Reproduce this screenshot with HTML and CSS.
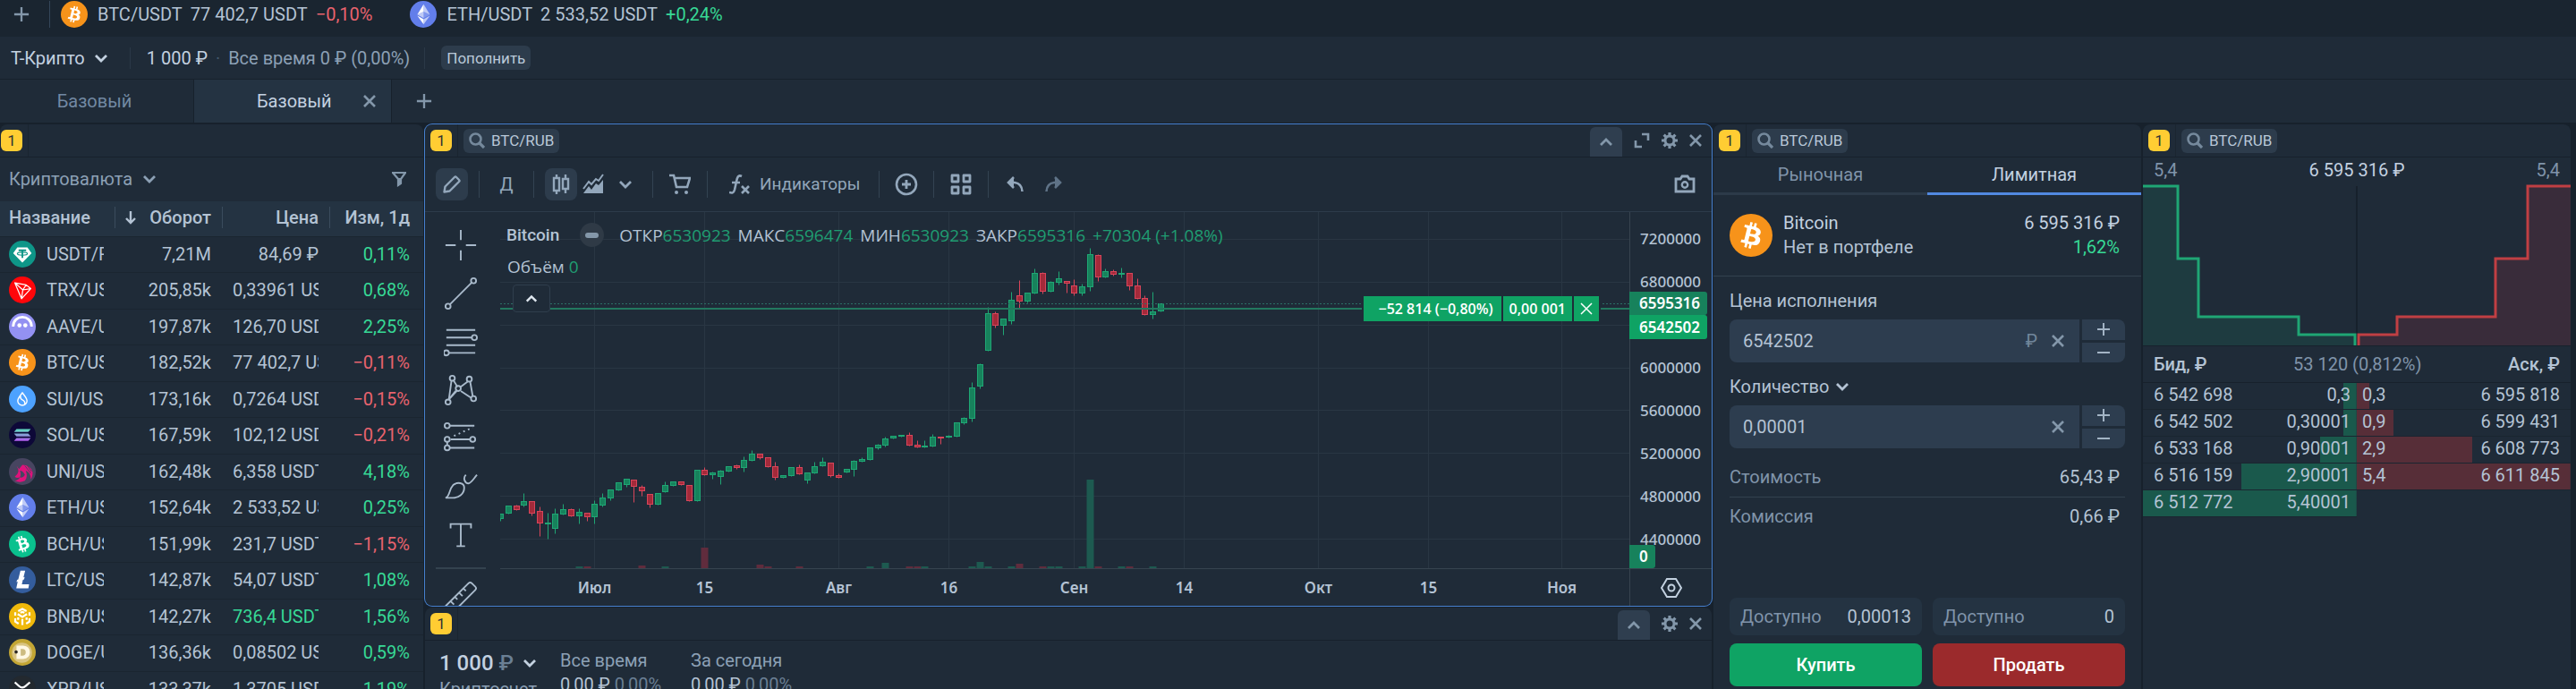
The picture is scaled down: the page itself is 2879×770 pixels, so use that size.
FILE: index.html
```
<!DOCTYPE html>
<html lang="ru">
<head>
  <meta charset="UTF-8" />
  <meta name="viewport" content="width=device-width, initial-scale=1.0"/>
  <title>BTC/RUB — Терминал</title>
  <link rel="stylesheet" href="styles.css">
</head>
<body>
  <!-- Icons -->
  <svg class="sprite" aria-hidden="true">
    <symbol id="i-plus" viewBox="0 0 20 20"><path d="M10 1v18M1 10h18" fill="none" stroke="currentColor" stroke-width="2.6"/></symbol>
    <symbol id="i-chevron" viewBox="0 0 16 16"><path d="M2 5l6 6 6-6" fill="none" stroke="currentColor" stroke-width="2.8"/></symbol>
    <symbol id="i-chevron-up" viewBox="0 0 16 16"><path d="M2 11l6-6 6 6" fill="none" stroke="currentColor" stroke-width="2.8"/></symbol>
    <symbol id="i-close" viewBox="0 0 14 14"><path d="M1 1l12 12M13 1L1 13" fill="none" stroke="currentColor" stroke-width="2.6"/></symbol>
    <symbol id="i-search" viewBox="0 0 18 18"><circle cx="7.5" cy="7.5" r="6" fill="none" stroke="currentColor" stroke-width="2.6"/><path d="M11.5 11.5l5.5 5.5" stroke="currentColor" stroke-width="3.2"/></symbol>
    <symbol id="i-filter" viewBox="0 0 18 18"><path d="M1 2h16M2 2l6 7v7l3-2V9l5-7" fill="none" stroke="currentColor" stroke-width="2.2"/><path d="M7 8h5v6l-4 3z" fill="currentColor"/></symbol>
    <symbol id="i-expand" viewBox="0 0 18 18"><path d="M9 2h7v7M2 9v7h7" fill="none" stroke="currentColor" stroke-width="2.6"/></symbol>
    <symbol id="i-gear" viewBox="0 0 18 18"><circle cx="9" cy="9" r="5" fill="none" stroke="currentColor" stroke-width="3"/><path d="M9 0v4M9 14v4M0 9h4M14 9h4M2.6 2.6l3 3M12.4 12.4l3 3M2.6 15.4l3-3M12.4 5.6l3-3" stroke="currentColor" stroke-width="3.2"/></symbol>
    <symbol id="i-down" viewBox="0 0 12 16"><path d="M6 1v13M1 9l5 5 5-5" fill="none" stroke="currentColor" stroke-width="2.4"/></symbol>
    <symbol id="i-pen" viewBox="0 0 24 24"><path d="M3.5 20.5l1-6L15 4q1-1 2 0l3 3q1 1 0 2L9.500 19.500z" fill="none" stroke="currentColor" stroke-width="2.4" stroke-linejoin="round"/></symbol>
    <symbol id="i-candles" viewBox="0 0 24 24"><path d="M7 1v4M7 19v4M17 1v5M17 17v5M4 5h6v14H4zM14 6h6v11h-6z" fill="none" stroke="currentColor" stroke-width="2.4"/></symbol>
    <symbol id="i-area" viewBox="0 0 24 24"><path d="M1 22l6-8 3 4 5-7 3 2 5-6v15z" fill="currentColor"/><path d="M1 17l6-8 3 3 5-6 3 2 5-7" fill="none" stroke="currentColor" stroke-width="2"/></symbol>
    <symbol id="i-cart" viewBox="0 0 24 24"><path d="M0 2h5l3 13h12l3-10H6" fill="none" stroke="currentColor" stroke-width="2.6"/><circle cx="8" cy="21" r="2" fill="currentColor"/><circle cx="19" cy="21" r="2" fill="currentColor"/></symbol>
    <symbol id="i-fx" viewBox="0 0 24 24"><path d="M14 3c-4-2-5 1-6 6l-2 9c-1 4-3 4-6 3M3 10h9M14 14l8 8M22 14l-8 8" fill="none" stroke="currentColor" stroke-width="2.6"/></symbol>
    <symbol id="i-add-circle" viewBox="0 0 26 26"><circle cx="13" cy="13" r="11" fill="none" stroke="currentColor" stroke-width="2.6"/><path d="M13 8v10M8 13h10" stroke="currentColor" stroke-width="2.8"/></symbol>
    <symbol id="i-grid" viewBox="0 0 24 24"><path d="M2 2h7v7H2zM15 2h7v7h-7zM2 15h7v7H2zM15 15h7v7h-7z" fill="none" stroke="currentColor" stroke-width="2.8" stroke-linejoin="round"/></symbol>
    <symbol id="i-undo" viewBox="0 0 20 20"><path d="M8 2L2 8l6 6M2.5 8H9q8 1 8.500 10" fill="none" stroke="currentColor" stroke-width="2.6"/><path d="M8 2v12L2 8z" fill="currentColor"/></symbol>
    <symbol id="i-redo" viewBox="0 0 20 20"><path d="M12 2l6 6-6 6M17.5 8H11q-8 1-8.500 10" fill="none" stroke="currentColor" stroke-width="2.6"/><path d="M12 2v12l6-6z" fill="currentColor"/></symbol>
    <symbol id="i-camera" viewBox="0 0 24 24"><path d="M2 6h5l2-3h6l2 3h5v14H2z" fill="none" stroke="currentColor" stroke-width="2.8"/><circle cx="12" cy="12.5" r="3.2" fill="none" stroke="currentColor" stroke-width="2.4"/></symbol>

    <!-- Coins -->
    <symbol id="c-btc" viewBox="0 0 32 32"><circle cx="16" cy="16" r="16" fill="#f7931a"/><path fill="#fff" d="M23.189 14.02c.314-2.096-1.283-3.223-3.465-3.975l.708-2.84-1.728-.43-.69 2.765c-.454-.114-.92-.22-1.385-.326l.695-2.783L15.596 6l-.708 2.839c-.376-.086-.746-.17-1.104-.26l.002-.009-2.384-.595-.46 1.846s1.283.294 1.256.312c.7.175.826.638.805 1.006l-.806 3.235c.048.012.11.03.18.057l-.183-.045-1.13 4.532c-.086.212-.303.531-.793.41.018.025-1.256-.313-1.256-.313l-.858 1.978 2.25.561c.418.105.828.215 1.231.318l-.715 2.872 1.727.43.708-2.84c.472.127.93.245 1.378.357l-.706 2.828 1.728.43.715-2.866c2.948.558 5.164.333 6.097-2.333.752-2.146-.037-3.385-1.588-4.192 1.13-.26 1.98-1.003 2.207-2.538zm-3.95 5.538c-.533 2.147-4.148.986-5.32.695l.95-3.805c1.172.293 4.929.872 4.37 3.11zm.535-5.569c-.487 1.953-3.495.96-4.47.717l.86-3.45c.975.243 4.118.696 3.61 2.733z"/></symbol>
    <symbol id="c-eth" viewBox="0 0 32 32"><circle cx="16" cy="16" r="16" fill="#627eea"/><g fill="#fff"><path opacity=".6" d="M16.498 4v8.870l7.497 3.350z"/><path d="M16.498 4L9 16.220l7.498-3.350z"/><path opacity=".6" d="M16.498 21.968v6.027L24 17.616z"/><path d="M16.498 27.995v-6.028L9 17.616z"/><path opacity=".2" d="M16.498 20.573l7.497-4.353-7.497-3.348z"/><path opacity=".6" d="M9 16.220l7.498 4.353v-7.701z"/></g></symbol>
    <symbol id="c-usdt" viewBox="0 0 32 32"><circle cx="16" cy="16" r="16" fill="#0e9688"/><path d="M10 8h12l5 7-11 11L5 15z" fill="#fff"/><path d="M11.5 11.5h9M16 11.5v9" stroke="#0e9688" stroke-width="2"/><ellipse cx="16" cy="15.5" rx="6" ry="1.8" fill="none" stroke="#0e9688" stroke-width="1.2"/></symbol>
    <symbol id="c-trx" viewBox="0 0 32 32"><circle cx="16" cy="16" r="16" fill="#ff060a"/><path d="M7 7.5l13.500 2.500 5.500 4.500L15 26.500zM7 7.500l9.500 8.500L15 26.500M16.500 16l9.500-1.500M16.500 16l4-6" fill="none" stroke="#fff" stroke-width="1.3" stroke-linejoin="round"/></symbol>
    <symbol id="c-aave" viewBox="0 0 32 32"><circle cx="16" cy="16" r="16" fill="#9391f2"/><path d="M5 16c0-15 22-15 22 0" fill="none" stroke="#fff" stroke-width="3"/><circle cx="12.5" cy="14.5" r="2.5" fill="#fff"/><circle cx="19.5" cy="14.5" r="2.5" fill="#fff"/></symbol>
    <symbol id="c-sui" viewBox="0 0 32 32"><circle cx="16" cy="16" r="16" fill="#4da2ff"/><path d="M16 8.500c3 4 5.500 6.500 5.500 9.500a5.500 5.500 0 0 1-11 0c0-3 2.500-5.500 5.500-9.500zM14 12.500q-1 3 2 4.500 4 2 2.500 5.500" fill="none" stroke="#fff" stroke-width="1.5"/></symbol>
    <linearGradient id="sol-fill" x1="0" y1="0" x2="0" y2="1"><stop offset="0" stop-color="#5fe0c0"/><stop offset="1" stop-color="#b35cf0"/></linearGradient>
    <symbol id="c-sol" viewBox="0 0 32 32"><circle cx="16" cy="16" r="16" fill="#0d0838"/><path d="M9 9h17l-3 3.500H6zM6 14.300h17l3 3.500H9zM9 19.600h17l-3 3.500H6z" fill="url(#sol-fill)"/></symbol>
    <symbol id="c-uni" viewBox="0 0 32 32"><circle cx="16" cy="16" r="16" fill="#474560"/><path d="M9 9l3 4 4-5q9 0 12 8 1 5-2 9 0-8-6-10 3 7-1 12-6 3-12 0 5-1 6-4-4 1-6-1l3-3q2-3 1-6z" fill="#e0127c"/><path d="M13 15q4 0 6 5-2 4-6 3 2-4 0-8z" fill="#474560"/><path d="M19 9l7 9M22 9l5 7" stroke="#474560" stroke-width="1"/></symbol>
    <symbol id="c-bch" viewBox="0 0 32 32"><circle cx="16" cy="16" r="16" fill="#0ac18e"/><g transform="rotate(-30 16 16)"><path fill="#fff" d="M23.189 14.02c.314-2.096-1.283-3.223-3.465-3.975l.708-2.84-1.728-.43-.69 2.765c-.454-.114-.92-.22-1.385-.326l.695-2.783L15.596 6l-.708 2.839c-.376-.086-.746-.17-1.104-.26l.002-.009-2.384-.595-.46 1.846s1.283.294 1.256.312c.7.175.826.638.805 1.006l-.806 3.235c.048.012.11.03.18.057l-.183-.045-1.13 4.532c-.086.212-.303.531-.793.41.018.025-1.256-.313-1.256-.313l-.858 1.978 2.25.561c.418.105.828.215 1.231.318l-.715 2.872 1.727.43.708-2.84c.472.127.93.245 1.378.357l-.706 2.828 1.728.43.715-2.866c2.948.558 5.164.333 6.097-2.333.752-2.146-.037-3.385-1.588-4.192 1.13-.26 1.98-1.003 2.207-2.538zm-3.95 5.538c-.533 2.147-4.148.986-5.32.695l.95-3.805c1.172.293 4.929.872 4.37 3.110zm.535-5.569c-.487 1.953-3.495.96-4.47.717l.86-3.450c.975.243 4.118.696 3.610 2.733z"/></g></symbol>
    <symbol id="c-ltc" viewBox="0 0 32 32"><circle cx="16" cy="16" r="16" fill="#345d9d"/><path fill="#fff" d="M10.427 18.214L9 18.768l.688-2.759 1.444-.58L13.713 5h5.629l-2.019 8.196 1.410-.571-.68 2.750-1.427.571-1.248 5.483H24L23.127 26H8.752z"/></symbol>
    <symbol id="c-bnb" viewBox="0 0 32 32"><circle cx="16" cy="16" r="16" fill="#f0b90b"/><path d="M11 9.500L16 7l5 2.500M7.500 15v-4M24.500 15v-4M7.500 18v4l4 2.500M24.500 18v4l-4 2.500M16 26v-7M10.500 13l5.500 3.500 5.500-3.500M11 17v3M21 17v3M13.500 11.500l2.500-1 2.500 1" fill="none" stroke="#fff" stroke-width="2.4"/></symbol>
    <symbol id="c-doge" viewBox="0 0 32 32"><circle cx="16" cy="16" r="16" fill="#c3a634"/><circle cx="15.5" cy="16.5" r="12" fill="#d9c482"/><path d="M9 8h8q8 1 8 8t-8 8H9v-7H6v-3h3z" fill="#fff8e4"/><path d="M14 12h2q4 0 4 4t-4 4h-2z" fill="#cdbb80"/><circle cx="8.5" cy="15.5" r="2" fill="#2b2620"/></symbol>
    <symbol id="c-xrp" viewBox="0 0 32 32"><circle cx="16" cy="16" r="16" fill="#23292f"/><path d="M7 8l5 4.500q4 3.500 8 0L25 8M7 24l5-4.500q4-3.500 8 0l5 4.500" fill="none" stroke="#fff" stroke-width="2.4"/></symbol>
  </svg>

  <!-- Quotes -->
  <header class="quotes">
    <button class="icon-btn quotes-add" aria-label="Добавить"><svg class="i18"><use href="#i-plus"/></svg></button>
    <div class="quote">
      <svg class="coin"><use href="#c-btc"/></svg>
      <span>BTC/USDT</span><span>77 402,7 USDT</span><span class="down">−0,10%</span>
    </div>
    <div class="quote">
      <svg class="coin"><use href="#c-eth"/></svg>
      <span>ETH/USDT</span><span>2 533,52 USDT</span><span class="up">+0,24%</span>
    </div>
  </header>

  <!-- Account -->
  <div class="account-bar">
    <button class="account-name">Т-Крипто <svg class="i16"><use href="#i-chevron"/></svg></button>
    <div class="account-sum">
      <span class="bright">1 000 ₽</span><span class="dot">·</span><span class="muted">Все время 0 ₽ (0,00%)</span>
    </div>
    <button class="chip">Пополнить</button>
  </div>

  <nav class="tabs">
    <button class="tab">Базовый</button>
    <div class="tab active"><button class="tab-label">Базовый</button><button class="icon-btn tab-close" aria-label="Закрыть"><svg class="i14"><use href="#i-close"/></svg></button></div>
    <button class="icon-btn tab-add" aria-label="Новая вкладка"><svg class="i18"><use href="#i-plus"/></svg></button>
  </nav>

  <main class="workspace">
    <!-- Watchlist -->
    <section class="panel watchlist">
      <div class="panel-head"><button class="badge">1</button></div>
      <div class="list-title">
        <button class="list-name">Криптовалюта <svg class="i16"><use href="#i-chevron"/></svg></button>
        <button class="icon-btn" aria-label="Фильтр"><svg class="i18"><use href="#i-filter"/></svg></button>
      </div>
      <table class="coins">
        <thead>
          <tr><th>Название</th><th><svg class="sort"><use href="#i-down"/></svg>Оборот</th><th>Цена</th><th>Изм, 1д</th></tr>
        </thead>
        <tbody>
          <tr><td><div class="name"><svg class="coin"><use href="#c-usdt"/></svg>USDT/RUB</div></td><td>7,21M</td><td><div class="cut">84,69 ₽</div></td><td class="up">0,11%</td></tr>
          <tr><td><div class="name"><svg class="coin"><use href="#c-trx"/></svg>TRX/USDT</div></td><td>205,85k</td><td><div class="cut">0,33961 USDT</div></td><td class="up">0,68%</td></tr>
          <tr><td><div class="name"><svg class="coin"><use href="#c-aave"/></svg>AAVE/USDT</div></td><td>197,87k</td><td><div class="cut">126,70 USDT</div></td><td class="up">2,25%</td></tr>
          <tr><td><div class="name"><svg class="coin"><use href="#c-btc"/></svg>BTC/USDT</div></td><td>182,52k</td><td><div class="cut">77 402,7 USDT</div></td><td class="down">−0,11%</td></tr>
          <tr><td><div class="name"><svg class="coin"><use href="#c-sui"/></svg>SUI/USDT</div></td><td>173,16k</td><td><div class="cut">0,7264 USDT</div></td><td class="down">−0,15%</td></tr>
          <tr><td><div class="name"><svg class="coin"><use href="#c-sol"/></svg>SOL/USDT</div></td><td>167,59k</td><td><div class="cut">102,12 USDT</div></td><td class="down">−0,21%</td></tr>
          <tr><td><div class="name"><svg class="coin"><use href="#c-uni"/></svg>UNI/USDT</div></td><td>162,48k</td><td><div class="cut">6,358 USDT</div></td><td class="up">4,18%</td></tr>
          <tr><td><div class="name"><svg class="coin"><use href="#c-eth"/></svg>ETH/USDT</div></td><td>152,64k</td><td><div class="cut">2 533,52 USDT</div></td><td class="up">0,25%</td></tr>
          <tr><td><div class="name"><svg class="coin"><use href="#c-bch"/></svg>BCH/USDT</div></td><td>151,99k</td><td><div class="cut">231,7 USDT</div></td><td class="down">−1,15%</td></tr>
          <tr><td><div class="name"><svg class="coin"><use href="#c-ltc"/></svg>LTC/USDT</div></td><td>142,87k</td><td><div class="cut">54,07 USDT</div></td><td class="up">1,08%</td></tr>
          <tr><td><div class="name"><svg class="coin"><use href="#c-bnb"/></svg>BNB/USDT</div></td><td>142,27k</td><td><div class="cut up">736,4 USDT</div></td><td class="up">1,56%</td></tr>
          <tr><td><div class="name"><svg class="coin"><use href="#c-doge"/></svg>DOGE/USDT</div></td><td>136,36k</td><td><div class="cut">0,08502 USDT</div></td><td class="up">0,59%</td></tr>
          <tr><td><div class="name"><svg class="coin"><use href="#c-xrp"/></svg>XRP/USDT</div></td><td>133,37k</td><td><div class="cut">1,3705 USDT</div></td><td class="up">1,19%</td></tr>
        </tbody>
      </table>
    </section>

    <div class="center">
      <!-- Chart -->
      <section class="panel chart-panel">
        <div class="panel-head">
          <button class="badge">1</button>
          <button class="chip search"><svg class="i18"><use href="#i-search"/></svg>BTC/RUB</button>
          <div class="panel-actions">
            <button class="fold" aria-label="Свернуть"><svg class="i16"><use href="#i-chevron-up"/></svg></button>
            <button class="icon-btn" aria-label="Развернуть"><svg class="i18"><use href="#i-expand"/></svg></button>
            <button class="icon-btn" aria-label="Настройки"><svg class="i18"><use href="#i-gear"/></svg></button>
            <button class="icon-btn" aria-label="Закрыть"><svg class="i14"><use href="#i-close"/></svg></button>
          </div>
        </div>

        <div class="toolbar">
          <div class="group"><button class="tool on" aria-label="Рисование"><svg class="i24"><use href="#i-pen"/></svg></button></div>
          <div class="group"><button class="tool">Д</button></div>
          <div class="group">
            <button class="tool on" aria-label="Свечи"><svg class="i24"><use href="#i-candles"/></svg></button>
            <button class="tool" aria-label="Область"><svg class="i24"><use href="#i-area"/></svg></button>
            <button class="tool" aria-label="Ещё"><svg class="i16"><use href="#i-chevron"/></svg></button>
          </div>
          <div class="group"><button class="tool" aria-label="Заявка"><svg class="i24"><use href="#i-cart"/></svg></button></div>
          <div class="group"><button class="tool wide"><svg class="i24"><use href="#i-fx"/></svg>Индикаторы</button></div>
          <div class="group"><button class="tool" aria-label="Сравнить"><svg class="i26"><use href="#i-add-circle"/></svg></button></div>
          <div class="group"><button class="tool" aria-label="Шаблоны"><svg class="i24"><use href="#i-grid"/></svg></button></div>
          <div class="group">
            <button class="tool" aria-label="Отменить"><svg class="i20"><use href="#i-undo"/></svg></button>
            <button class="tool dim" aria-label="Повторить"><svg class="i20"><use href="#i-redo"/></svg></button>
          </div>
          <button class="tool shot" aria-label="Снимок"><svg class="i24"><use href="#i-camera"/></svg></button>
        </div>

        <div class="chart">
          <div class="drawing">
            <button aria-label="Перекрестие"><svg viewBox="0 0 40 40"><path d="M20 2v12M20 26v12M2 20h12M26 20h12"/></svg></button>
            <button aria-label="Линия"><svg viewBox="0 0 40 40"><path d="M7 33L33 7"/><circle cx="5" cy="35" r="3"/><circle cx="35" cy="5" r="3"/></svg></button>
            <button aria-label="Фибоначчи"><svg viewBox="0 0 40 40"><path d="M3 6h34M3 15h30M3 24h34M6 33h31"/><circle cx="36" cy="15" r="3"/><circle cx="3" cy="33" r="3"/></svg></button>
            <button aria-label="Паттерн"><svg viewBox="0 0 40 40"><path d="M11 8l5 8M20 16l8-6M6 31l8-10M20 21l12 8M9 9L6 31M31 10l3 17M16 20L6 31"/><circle cx="10" cy="6" r="3"/><circle cx="30" cy="7" r="3"/><circle cx="17" cy="18" r="3"/><circle cx="5" cy="34" r="3"/><circle cx="35" cy="30" r="3"/></svg></button>
            <button aria-label="Позиция"><svg viewBox="0 0 40 40"><path d="M7 5h29M8 21h23M7 31h29M4 24v4"/><path d="M12 17L34 7" stroke-dasharray="2 4"/><circle cx="4" cy="5" r="3"/><circle cx="4" cy="21" r="3"/><circle cx="34" cy="21" r="3"/><circle cx="4" cy="31" r="3"/></svg></button>
            <button aria-label="Кисть"><svg viewBox="0 0 40 40"><path d="M2 33c5-1 4-10 9-15 5-4 13-3 13 3 0 8-7 12-13 12zM26 6c-4 4-1 10 3 10 3 0 5-4 10-10"/></svg></button>
            <button aria-label="Текст"><svg viewBox="0 0 40 40"><path d="M8 12V7h24v5M20 7v26M15 33h10"/></svg></button>
            <button class="after-line" aria-label="Линейка"><svg viewBox="0 0 40 40"><path d="M2 30L29 3q2-2 4 0l4 4q2 2 0 4L10 38M8 24l4 4M13 19l3 3M18 14l4 4M23 9l3 3"/></svg></button>
          </div>

          <div class="plot">
            <svg id="plot" viewBox="0 0 1262 398" preserveAspectRatio="none"></svg>
            <div class="legend">
              <strong>Bitcoin</strong>
              <button class="status" aria-label="Статус"></button>
              <span>ОТКР<i>6530923</i></span><span>МАКС<i>6596474</i></span><span>МИН<i>6530923</i></span><span>ЗАКР<i>6595316</i></span><i class="delta">+70304 (+1.08%)</i>
            </div>
            <div class="volume-legend">Объём <i>0</i></div>
            <button class="collapse" aria-label="Свернуть"><svg class="i14"><use href="#i-chevron-up"/></svg></button>
            <div class="order-line"><span>−52 814 (−0,80%)</span><span>0,00 001</span><button aria-label="Снять заявку"><svg class="i14" viewBox="0 0 14 14"><path d="M1 1l12 12M13 1L1 13" stroke="#fff" stroke-width="1.5"/></svg></button></div>
          </div>

          <div class="price-scale">
            <span>7200000</span><span>6800000</span><span class="ghost"></span><span>6000000</span><span>5600000</span><span>5200000</span><span>4800000</span><span>4400000</span>
            <b class="tag last">6595316</b>
            <b class="tag limit">6542502</b>
            <b class="tag vol">0</b>
          </div>
          <div class="time-scale" id="timeScale"></div>
          <button class="scale-settings" aria-label="Настройки шкалы"><svg class="i24" viewBox="0 0 24 24"><path d="M7 2h10l6 10-6 10H7L1 12z"/><circle cx="12" cy="12" r="3.5"/></svg></button>
        </div>
      </section>

      <!-- Portfolio -->
      <section class="panel portfolio">
        <div class="panel-head">
          <button class="badge">1</button>
          <div class="panel-actions">
            <button class="fold" aria-label="Свернуть"><svg class="i16"><use href="#i-chevron-up"/></svg></button>
            <button class="icon-btn" aria-label="Настройки"><svg class="i18"><use href="#i-gear"/></svg></button>
            <button class="icon-btn" aria-label="Закрыть"><svg class="i14"><use href="#i-close"/></svg></button>
          </div>
        </div>
        <div class="totals">
          <div><button class="total">1 000 <span class="faint">₽</span> <svg class="i16"><use href="#i-chevron"/></svg></button><div class="muted">Криптосчет</div></div>
          <div><div class="muted">Все время</div><div>0,00 ₽ <span class="faint">0,00%</span></div></div>
          <div><div class="muted">За сегодня</div><div>0,00 ₽ <span class="faint">0,00%</span></div></div>
        </div>
      </section>
    </div>

    <!-- Order form -->
    <section class="panel order">
      <div class="panel-head">
        <button class="badge">1</button>
        <button class="chip search"><svg class="i18"><use href="#i-search"/></svg>BTC/RUB</button>
      </div>
      <div class="order-tabs">
        <button>Рыночная</button>
        <button class="active">Лимитная</button>
      </div>
      <div class="asset">
        <svg class="coin-big"><use href="#c-btc"/></svg>
        <div><div class="strong">Bitcoin</div><div>Нет в портфеле</div></div>
        <div class="asset-price"><div class="strong">6 595 316 ₽</div><div class="up">1,62%</div></div>
      </div>
      <form class="order-form">
        <label for="price">Цена исполнения</label>
        <div class="field">
          <div class="field-box"><input id="price" type="text" value="6542502"><span class="unit">₽</span><button type="button" class="icon-btn" aria-label="Очистить"><svg class="i14"><use href="#i-close"/></svg></button></div>
          <div class="stepper"><button type="button" aria-label="Больше"><svg class="i14"><path d="M7 0v14M0 7h14"/></svg></button><button type="button" aria-label="Меньше"><svg class="i14"><path d="M0 7h14"/></svg></button></div>
        </div>
        <label for="amount">Количество <svg class="i16"><use href="#i-chevron"/></svg></label>
        <div class="field">
          <div class="field-box"><input id="amount" type="text" value="0,00001"><button type="button" class="icon-btn" aria-label="Очистить"><svg class="i14"><use href="#i-close"/></svg></button></div>
          <div class="stepper"><button type="button" aria-label="Больше"><svg class="i14"><path d="M7 0v14M0 7h14"/></svg></button><button type="button" aria-label="Меньше"><svg class="i14"><path d="M0 7h14"/></svg></button></div>
        </div>
        <dl class="costs">
          <div><dt>Стоимость</dt><dd>65,43 ₽</dd></div>
          <div><dt>Комиссия</dt><dd>0,66 ₽</dd></div>
        </dl>
        <div class="deal">
          <div class="available"><span>Доступно</span>0,00013</div>
          <div class="available"><span>Доступно</span>0</div>
          <button type="button" class="buy">Купить</button>
          <button type="button" class="sell">Продать</button>
        </div>
      </form>
    </section>

    <!-- Order book -->
    <section class="panel book">
      <div class="panel-head">
        <button class="badge">1</button>
        <button class="chip search"><svg class="i18"><use href="#i-search"/></svg>BTC/RUB</button>
      </div>
      <div class="depth-head"><span>5,4</span><b>6 595 316 ₽</b><span>5,4</span></div>
      <svg class="depth" viewBox="0 0 478 180" preserveAspectRatio="none">
        <path class="mid" d="M239 2v178"/>
        <path class="bid-area" d="M0 2h39v81h23v65h112v20h63v12H0z"/>
        <path class="ask-area" d="M478 2h-48v81h-36v65H284v20h-43v12h237z"/>
        <path class="bid-line" d="M0 2h39v81h23v65h112v20h63v12"/>
        <path class="ask-line" d="M478 2h-48v81h-36v65H284v20h-43v12"/>
      </svg>
      <div class="spread"><b>Бид, ₽</b><span>53 120 (0,812%)</span><b>Аск, ₽</b></div>
      <div class="levels">
        <table class="bids">
          <tr style="--fill:6%"><td>6 542 698</td><td>0,3</td></tr>
          <tr style="--fill:6%"><td>6 542 502</td><td>0,30001</td></tr>
          <tr style="--fill:17%"><td>6 533 168</td><td>0,90001</td></tr>
          <tr style="--fill:54%"><td>6 516 159</td><td>2,90001</td></tr>
          <tr style="--fill:100%"><td>6 512 772</td><td>5,40001</td></tr>
        </table>
        <table class="asks">
          <tr style="--fill:6%"><td>0,3</td><td>6 595 818</td></tr>
          <tr style="--fill:17%"><td>0,9</td><td>6 599 431</td></tr>
          <tr style="--fill:54%"><td>2,9</td><td>6 608 773</td></tr>
          <tr style="--fill:100%"><td>5,4</td><td>6 611 845</td></tr>
        </table>
      </div>
    </section>
  </main>

  <script src="script.js"></script>
</body>
</html>
```
FILE: styles.css
```
* {
  box-sizing: border-box;
}

body {
  margin: 0;
  height: 100vh;
  overflow: hidden;
  display: flex;
  flex-direction: column;
  background-color: #17212c;
  color: #b4c3d4;
  font-family: Roboto, "Noto Sans", sans-serif;
  font-size: 20px;
  line-height: 24px;
}

button {
  padding: 0;
  border: none;
  background: none;
  color: inherit;
  font: inherit;
  cursor: pointer;
}

svg {
  display: block;
  flex: none;
}

.sprite {
  position: absolute;
  width: 0;
  height: 0;
}

.i14 { width: 14px; height: 14px; }
.i16 { width: 16px; height: 16px; }
.i18 { width: 18px; height: 18px; }
.i20 { width: 20px; height: 20px; }
.i24 { width: 24px; height: 24px; }
.i26 { width: 26px; height: 26px; }

.up { color: #37d996; }
.down { color: #e8636e; }
.muted { color: #8ca0b5; }
.faint { color: #6a7f94; }
.bright { color: #c3d1e0; }

.icon-btn {
  display: flex;
  color: #8397aa;
}

.coin {
  width: 30px;
  height: 30px;
}

/* Quotes */
.quotes {
  display: flex;
  align-items: center;
  height: 41px;
  padding-bottom: 9px;
  background-color: #1a2530;
}

.quotes-add {
  align-items: center;
  height: 30px;
  padding: 0 22px 0 15px;
  border-right: 1px solid #34465a;
}

.quote {
  display: flex;
  align-items: center;
  gap: 9px;
  margin: 0 30px 0 12px;
}

.quote .coin {
  margin-right: 2px;
}

/* Account bar */
.account-bar {
  display: flex;
  align-items: center;
  height: 47px;
  padding-left: 12px;
  background-color: #1f2b38;
}

.account-name {
  display: flex;
  align-items: center;
  gap: 10px;
  color: #c3d1e0;
}

.account-sum {
  display: flex;
  gap: 9px;
  margin: 0 18px 0 24px;
  padding: 0 16px 0 18px;
  border: solid #2a3847;
  border-width: 0 1px;
}

.dot {
  color: #45586b;
}

.chip {
  display: flex;
  align-items: center;
  height: 27px;
  padding: 0 6px;
  border-radius: 6px;
  background-color: #2d3c4c;
  color: #b9c8d8;
  font-size: 17px;
}

/* Tabs */
.tabs {
  display: flex;
  height: 49px;
  border-top: 1px solid #17212c;
  background-color: #1f2b38;
}

.tab {
  display: flex;
  align-items: center;
  justify-content: center;
  width: 217px;
  padding-right: 5px;
  border-right: 1px solid #17212c;
  color: #7289a3;
}

.tab.active {
  width: 221px;
  padding: 0 17px 0 70px;
  justify-content: space-between;
  background-color: #243342;
  color: #c3d1e0;
}

.tab-add {
  align-items: center;
  padding: 0 27px;
}

/* Workspace */
.workspace {
  flex: 1;
  min-height: 0;
  display: flex;
  gap: 2px;
  padding: 2px 6px 0 0;
}

.panel {
  min-width: 0;
  overflow: hidden;
  border-radius: 8px 8px 0 0;
  background-color: #1f2b38;
}

.panel-head {
  display: flex;
  align-items: center;
  height: 37px;
  padding-left: 6px;
  border-bottom: 1px solid #17212c;
}

.badge {
  width: 24px;
  height: 24px;
  border-radius: 6px;
  background-color: #ffcd33;
  color: #333;
  font-size: 17px;
  line-height: 24px;
}

/* divider after the group number */
.panel-head::before {
  content: "";
  order: 1;
  align-self: stretch;
  width: 1px;
  margin-left: 6px;
  background-color: #1a2530;
}

.search {
  order: 2;
  gap: 7px;
  margin-left: 6px;
}

.search svg {
  color: #75899c;
}

.panel-actions {
  order: 3;
  display: flex;
  align-items: center;
  align-self: stretch;
  gap: 13px;
  margin-left: auto;
  padding-right: 11px;
}

.fold {
  display: flex;
  align-items: center;
  justify-content: center;
  align-self: flex-end;
  width: 36px;
  height: 33px;
  border-radius: 6px 6px 0 0;
  background-color: #2f3e4f;
  color: #8397aa;
}

/* Watchlist */
.watchlist {
  width: 473px;
}

.watchlist .panel-head {
  padding-left: 1px;
}

.list-title {
  display: flex;
  align-items: center;
  justify-content: space-between;
  height: 49px;
  padding: 0 18px 2px 10px;
}

.list-name {
  display: flex;
  align-items: center;
  gap: 11px;
  color: #8ca0b5;
}

.coins {
  width: 100%;
  table-layout: fixed;
  border-collapse: separate;
  border-spacing: 0;
}

.coins th {
  height: 40px;
  padding: 0 12px 4px;
  background-color: #243342;
  border-bottom: 1px solid #1a2530;
  font-weight: 500;
  text-align: right;
  white-space: nowrap;
}

.coins th + th {
  width: 120px;
  background-image: linear-gradient(#3b4c5d, #3b4c5d);
  background-size: 1px 24px;
  background-position: 0 6px;
  background-repeat: no-repeat;
}

.coins th:last-child {
  width: 105px;
}

.coins th:first-child {
  padding-left: 10px;
  text-align: left;
}

.sort {
  float: left;
  width: 12px;
  height: 16px;
  margin-top: 4px;
}

.coins td {
  height: 40px;
  padding: 0 12px 2px;
  border-bottom: 1px solid #1a2530;
  text-align: right;
  white-space: nowrap;
}

.coins tr:nth-child(even) td {
  height: 41px;
}

.coins td:first-child {
  padding-left: 10px;
}

.coins th:last-child,
.coins td:last-child {
  padding-left: 0;
  padding-right: 15px;
}

.name {
  display: flex;
  align-items: center;
  gap: 12px;
  overflow: hidden;
}

.cut {
  overflow: hidden;
}

/* Center column */
.center {
  flex: 1;
  min-width: 0;
  display: flex;
  flex-direction: column;
  gap: 2px;
}

.chart-panel {
  flex: none;
  border-radius: 8px;
  box-shadow: 0 0 0 1px #4680cf;
}

.toolbar {
  display: flex;
  align-items: center;
  height: 61px;
  border-bottom: 1px solid #2d3b4a;
  color: #93a7bb;
}

.group {
  display: flex;
  align-items: center;
  height: 30px;
  padding: 0 12px;
  border-right: 1px solid #334352;
}

.group:nth-child(8) {
  gap: 6px;
  border: none;
}

.tool {
  display: flex;
  align-items: center;
  justify-content: center;
  width: 36px;
  height: 36px;
  border-radius: 8px;
}

.tool.on {
  background-color: #2d3c4c;
}

.tool.wide {
  width: auto;
  gap: 10px;
  padding: 0 9px 0 12px;
  font-size: 19px;
}

.tool.dim {
  color: #5f7387;
}

.tool.shot {
  margin: 0 12px 0 auto;
}

.chart {
  display: grid;
  grid-template-columns: 84px 1fr 92px;
  grid-template-rows: 398px 42px;
}

.drawing {
  grid-row: 1 / 3;
  height: 440px;
  overflow: hidden;
  padding-top: 10px;
}

.drawing button {
  display: flex;
  align-items: center;
  justify-content: center;
  width: 80px;
  height: 54px;
}

.drawing svg {
  width: 38px;
  height: 38px;
  fill: none;
  stroke: #a9bacb;
  stroke-width: 2;
}

.drawing .after-line {
  width: 56px;
  height: 66px;
  margin: 9px 12px 0;
  border-top: 2px solid #34434f;
}

.plot {
  position: relative;
}

#plot {
  width: 100%;
  height: 398px;
}

.grid-line { stroke: #293643; }
.candle-up { fill: #17825c; stroke: #1fa674; }
.candle-down { fill: #a32a3a; stroke: #d8455a; }
.vol-up { fill: #1d5a50; }
.vol-down { fill: #602c3d; }
.last-line { stroke: #2b6f66; stroke-dasharray: 2 2; }
.limit-line { stroke: #23795f; stroke-width: 2; }

.legend {
  position: absolute;
  top: 12px;
  left: 7px;
  display: flex;
  align-items: center;
  gap: 8px;
  font-family: "Open Sans", "Noto Sans", sans-serif;
  font-size: 19px;
  white-space: nowrap;
}

.legend strong {
  font-weight: 500;
  font-family: Roboto, sans-serif;
}

.legend i,
.volume-legend i {
  color: #1f9d72;
  font-style: normal;
}

.status {
  display: flex;
  align-items: center;
  justify-content: center;
  width: 27px;
  height: 27px;
  margin: 0 9px 0 15px;
  border-radius: 50%;
  background-color: #2f3a46;
}

.status::before {
  content: "";
  width: 15px;
  height: 6px;
  border-radius: 3px;
  background-color: #8497a9;
}

.volume-legend {
  position: absolute;
  top: 49px;
  left: 8px;
  font-family: "Open Sans", "Noto Sans", sans-serif;
  font-size: 19px;
}

.collapse {
  position: absolute;
  top: 81px;
  left: 14px;
  display: flex;
  align-items: center;
  justify-content: center;
  width: 42px;
  height: 31px;
  border: 1px solid #2f3e4d;
  border-radius: 4px;
  background-color: #1f2b38;
  color: #dfe7ef;
}

.order-line {
  position: absolute;
  top: 94px;
  right: 32px;
  display: flex;
  gap: 2px;
  border: solid #1f2b38;
  border-width: 0 2px;
  background-color: #1f2b38;
  color: #fff;
  font: 600 16px/28px "Open Sans", "Noto Sans", sans-serif;
}

.order-line > * {
  height: 28px;
  padding: 0 7px;
  background-color: #0fa364;
}

.order-line span:first-child {
  padding: 0 9px 0 16px;
}

.price-scale {
  position: relative;
  padding-top: 6px;
  border-left: 1px solid #37444f;
  font: 500 17px/24px "Noto Sans", sans-serif;
}

.price-scale span {
  display: block;
  height: 48px;
  padding-left: 11px;
  line-height: 48px;
}

.tag {
  position: absolute;
  left: -1px;
  padding: 0 8px 0 11px;
  border-radius: 0 3px 3px 0;
  color: #fff;
  font-weight: 600;
  line-height: 26px;
}

.tag.last {
  top: 89px;
  background-color: #17825c;
}

.tag.limit {
  top: 115px;
  background-color: #0fa364;
  line-height: 27px;
}

.tag.vol {
  top: 372px;
  background-color: #17825c;
}

.time-scale {
  position: relative;
  border-top: 1px solid #37444f;
}

.time-scale span {
  position: absolute;
  top: 9px;
  transform: translateX(-50%);
  font: 600 17px/24px "Noto Sans", sans-serif;
}

.scale-settings {
  display: flex;
  align-items: center;
  justify-content: center;
  border: solid #37444f;
  border-width: 1px 0 0 1px;
}

.scale-settings svg {
  fill: none;
  stroke: #c3d1e0;
  stroke-width: 2;
}

/* Portfolio */
.portfolio {
  flex: 1;
}

.totals {
  display: flex;
  padding: 9px 16px 0;
  line-height: 27px;
  white-space: nowrap;
}

.totals > div {
  width: 146px;
}

.totals > div:first-child {
  width: 135px;
}

.total {
  display: flex;
  align-items: center;
  gap: 6px;
  height: 32px;
  color: #c3d1e0;
  font-size: 24px;
  font-weight: 500;
}

.total svg {
  margin-left: 4px;
}

/* Order form */
.order,
.book {
  width: 478px;
}

.order {
  display: flex;
  flex-direction: column;
}

.order .panel-head {
  flex: none;
}

.order-tabs {
  display: flex;
}

.order-tabs button {
  flex: 1;
  height: 42px;
  padding-bottom: 2px;
  border-bottom: 3px solid #2c3a49;
  color: #8094aa;
}

.order-tabs .active {
  border-color: #5289e0;
  color: #c3d1e0;
}

.asset {
  display: flex;
  align-items: center;
  gap: 12px;
  height: 91px;
  padding: 0 24px 0 18px;
  border-bottom: 1px solid #33424f;
  line-height: 27px;
}

.coin-big {
  width: 48px;
  height: 48px;
}

.strong {
  color: #c3d1e0;
}

.asset-price {
  margin-left: auto;
  text-align: right;
}

.order-form {
  flex: 1;
  display: flex;
  flex-direction: column;
  padding: 0 18px 3px;
}

.order-form label {
  display: flex;
  align-items: center;
  gap: 7px;
  height: 48px;
  padding-top: 5px;
}

.field {
  display: flex;
  gap: 3px;
  height: 48px;
}

.field-box {
  flex: 1;
  display: flex;
  align-items: center;
  padding: 0 17px 0 15px;
  border-radius: 8px 0 0 8px;
  background-color: #2d3d4f;
}

.field-box input {
  flex: 1;
  min-width: 0;
  padding: 0;
  border: none;
  outline: none;
  background: none;
  color: #b4c3d4;
  font: inherit;
}

.unit {
  margin-right: 16px;
  color: #71869b;
}

.stepper {
  display: flex;
  flex-direction: column;
  gap: 3px;
  width: 48px;
}

.stepper button {
  flex: 1;
  display: flex;
  align-items: center;
  justify-content: center;
  background-color: #2d3d4f;
}

.stepper button:first-child {
  border-radius: 0 8px 0 0;
}

.stepper button:last-child {
  border-radius: 0 0 8px 0;
}

.stepper svg {
  stroke: #a3b4c5;
  stroke-width: 2;
}

.costs {
  margin: 11px 0 0;
}

.costs div {
  display: flex;
  justify-content: space-between;
  padding: 9px 6px 10px 0;
}

.costs div:first-child {
  border-bottom: 1px solid #33424f;
}

.costs dt {
  color: #8094aa;
}

.costs dd {
  margin: 0;
}

.deal {
  display: grid;
  grid-template-columns: 1fr 1fr;
  gap: 9px 12px;
  margin-top: auto;
}

.available {
  display: flex;
  align-items: center;
  justify-content: space-between;
  height: 42px;
  padding: 0 12px;
  border-radius: 8px;
  background-color: #243342;
}

.available span {
  color: #8094aa;
}

.buy,
.sell {
  height: 48px;
  border-radius: 8px;
  color: #fff;
  font-weight: 500;
}

.buy {
  background-color: #0fa364;
}

.sell {
  background-color: #9b2a2c;
}

/* Order book */
.depth-head,
.spread {
  display: flex;
  justify-content: space-between;
  padding: 0 12px;
  color: #8094aa;
}

.depth-head {
  height: 30px;
  line-height: 28px;
}

.depth-head b {
  color: #c3d1e0;
  font-weight: 400;
}

.depth {
  width: 100%;
  height: 180px;
  fill: none;
}

.mid { stroke: #17212c; stroke-width: 2; }
.bid-area { fill: #1e3b40; }
.ask-area { fill: #392c3a; }
.bid-line { stroke: #1fa674; stroke-width: 3; }
.ask-line { stroke: #c03f43; stroke-width: 3; }

.spread {
  height: 42px;
  border: solid #17212c;
  border-width: 1px 0;
  line-height: 40px;
}

.spread b {
  color: #b4c3d4;
  font-weight: 500;
}

.levels {
  display: flex;
  align-items: flex-start;
}

.levels table {
  flex: 1;
  border-collapse: separate;
  border-spacing: 0;
}

.levels td {
  height: 30px;
  padding: 0 0 4px 12px;
  border-bottom: 1px solid #1a2530;
}

.levels td + td {
  padding: 0 12px 4px 0;
  text-align: right;
}

.levels .bids td + td {
  padding-right: 7px;
}

.levels .asks td:first-child {
  padding-left: 6px;
}

.bids tr {
  background: linear-gradient(to left, #1a594c var(--fill), transparent 0);
}

.asks tr {
  background: linear-gradient(to right, #572e38 var(--fill), transparent 0);
}
```
FILE: script.js
```
const STEP = 8.785;
const BASE_Y = 113;
const TICK = 3;

// high, body top, body bottom, low, direction; ticks below the base level
const candles = [
  [672, 672, 690, 696, 1], [645, 645, 671, 671, 1], [642, 645, 659, 659, 0], [602, 630, 645, 648, 1],
  [630, 630, 671, 677, 0], [648, 663, 705, 747, 0], [668, 702, 704, 756, 1], [654, 671, 722, 738, 1],
  [638, 656, 674, 674, 1], [654, 657, 680, 680, 0], [654, 666, 680, 705, 1], [669, 669, 683, 695, 0],
  [627, 639, 683, 705, 1], [602, 618, 644, 648, 1], [591, 591, 620, 626, 1], [567, 567, 593, 593, 1],
  [555, 555, 575, 581, 1], [558, 558, 581, 633, 0], [576, 582, 597, 612, 0], [606, 606, 641, 650, 0],
  [603, 603, 641, 641, 1], [564, 576, 599, 599, 1], [564, 564, 578, 578, 1], [564, 564, 576, 576, 0],
  [576, 576, 629, 629, 0], [525, 525, 629, 629, 1], [516, 525, 542, 542, 0], [530, 534, 542, 555, 1],
  [525, 528, 548, 573, 1], [513, 513, 530, 530, 1], [508, 510, 518, 521, 0], [480, 492, 518, 530, 1],
  [459, 471, 494, 494, 1], [471, 471, 486, 488, 0], [483, 483, 515, 515, 0], [498, 513, 551, 557, 0],
  [543, 543, 551, 551, 1], [516, 516, 545, 545, 1], [507, 516, 540, 540, 0], [534, 534, 560, 570, 1],
  [498, 513, 536, 536, 1], [483, 498, 512, 512, 1], [501, 501, 545, 548, 0], [537, 543, 551, 551, 0],
  [522, 522, 533, 533, 1], [492, 495, 524, 545, 1], [483, 489, 497, 498, 1], [450, 450, 491, 491, 1],
  [438, 441, 453, 456, 1], [414, 420, 443, 446, 1], [411, 411, 419, 419, 1], [408, 408, 413, 413, 1],
  [399, 408, 443, 443, 0], [426, 441, 449, 449, 0], [426, 444, 449, 449, 1], [405, 414, 446, 446, 1],
  [414, 414, 416, 438, 0], [408, 411, 416, 416, 1], [366, 366, 413, 413, 1], [348, 351, 369, 372, 1],
  [231, 249, 353, 362, 1], [168, 171, 245, 252, 1], [-20, 0, 126, 126, 1], [-6, 0, 41, 48, 0],
  [18, 18, 41, 72, 1], [-72, -45, 26, 36, 1], [-111, -60, -40, -18, 0], [-68, -68, -40, -37, 1],
  [-150, -135, -67, -67, 1], [-138, -135, -73, -67, 0], [-108, -105, -73, -73, 1], [-141, -117, -102, -96, 1],
  [-108, -108, -100, -69, 0], [-114, -93, -67, -61, 0], [-99, -90, -67, -61, 1], [-219, -198, -88, -75, 1],
  [-198, -195, -121, -109, 0], [-150, -141, -121, -121, 1], [-147, -141, -130, -126, 0], [-153, -135, -130, -120, 1],
  [-135, -135, -90, -79, 0], [-117, -93, -49, -49, 0], [-60, -52, 5, 5, 0], [-72, -6, 5, 18, 1],
  [-33, -33, -7, -7, 1]
];

// candle index: bar height
const volumes = {
  10: 2, 11: 2, 18: 3, 21: 2, 26: 23, 33: 4, 34: 2, 38: 2, 47: 2, 49: 6, 52: 2, 53: 2, 54: 2,
  60: 2, 61: 7, 62: 2, 65: 2, 66: 5, 69: 2, 70: 2, 71: 2, 74: 2, 75: 99, 76: 2, 79: 2, 80: 2, 83: 2
};

const dates = [["Июл", 12], ["15", 26], ["Авг", 43], ["16", 57], ["Сен", 73], ["14", 87], ["Окт", 104], ["15", 118], ["Ноя", 135]];

const xAt = (i) => Math.round(i * STEP) + 0.5;
const yAt = (v) => Math.round(BASE_Y + v / TICK) + 0.5;

function drawPlot() {
  let out = "";

  for (let i = 0; i < 8; i++) {
    const y = Math.round(30 + i * 47.85) + 0.5;
    out += `<path class="grid-line" d="M0 ${y}H1262"/>`;
  }
  dates.forEach(([, i]) => {
    out += `<path class="grid-line" d="M${xAt(i)} 0V398"/>`;
  });

  Object.entries(volumes).forEach(([i, h]) => {
    const name = candles[i][4] ? "vol-up" : "vol-down";
    out += `<rect class="${name}" x="${xAt(i) - 4}" y="${398 - h}" width="8" height="${h}"/>`;
  });

  candles.forEach(([high, top, bottom, low, up], i) => {
    const x = xAt(i);
    const name = up ? "candle-up" : "candle-down";
    const height = Math.max(yAt(bottom) - yAt(top) - 1, 1);
    out += `<path class="${name}" d="M${x} ${yAt(high)}V${yAt(low)}"/>`;
    out += `<rect class="${name}" x="${x - 3}" y="${yAt(top)}" width="6" height="${height}"/>`;
  });

  out += `<path class="last-line" d="M0 102.5H1262"/>`;
  out += `<path class="limit-line" d="M0 108H1262"/>`;
  document.getElementById("plot").innerHTML = out;
}

function drawDates() {
  const scale = document.getElementById("timeScale");
  dates.forEach(([text, i]) => {
    const label = document.createElement("span");
    label.textContent = text;
    label.style.left = (xAt(i) / 1262) * 100 + "%";
    scale.appendChild(label);
  });
}

drawPlot();
drawDates();
```
